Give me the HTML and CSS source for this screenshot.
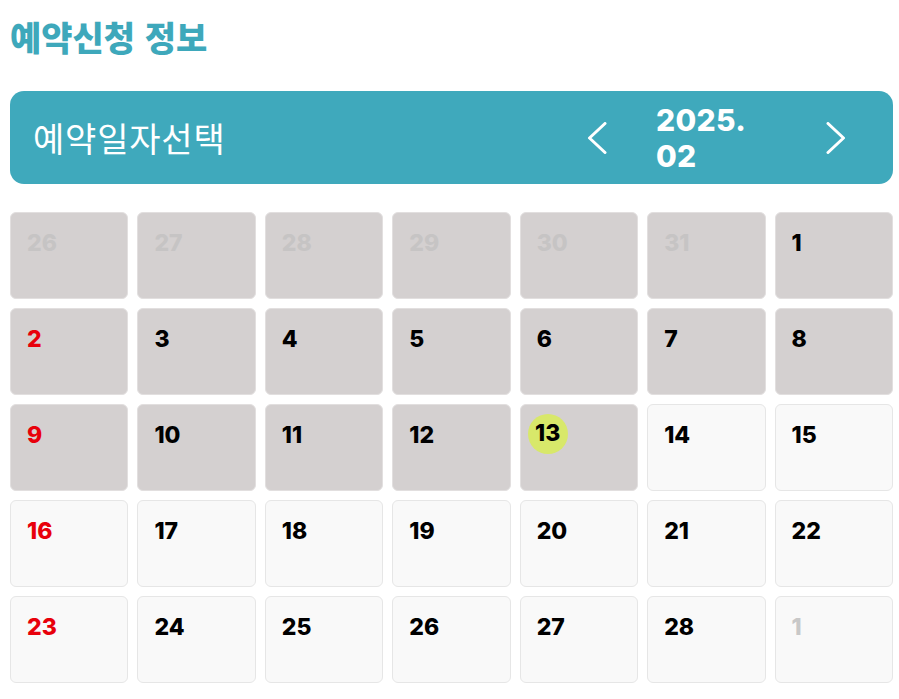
FILE: index.html
```
<!DOCTYPE html>
<html lang="ko">
<head>
<meta charset="utf-8">
<title>예약신청 정보</title>
<link rel="stylesheet" href="styles.css">
</head>
<body>
<h1 class="page-title">예약신청 정보</h1>
<div class="cal-bar">
  <div class="cal-bar-title">예약일자선택</div>
  <div class="cal-nav">
    <button class="nav-btn prev" aria-label="이전 달">
      <svg width="20" height="32" viewBox="0 0 20 32"><polyline points="18,1.5 2.5,16 18,30.5" fill="none" stroke="#fff" stroke-width="3" stroke-linecap="round" stroke-linejoin="round"/></svg>
    </button>
    <div class="cal-month">2025. 02</div>
    <button class="nav-btn next" aria-label="다음 달">
      <svg width="20" height="32" viewBox="0 0 20 32"><polyline points="2,1.5 17.5,16 2,30.5" fill="none" stroke="#fff" stroke-width="3" stroke-linecap="round" stroke-linejoin="round"/></svg>
    </button>
  </div>
</div>
<div class="cal-grid">
  <div class="cell past"><span class="num other">26</span></div>
  <div class="cell past"><span class="num other">27</span></div>
  <div class="cell past"><span class="num other">28</span></div>
  <div class="cell past"><span class="num other">29</span></div>
  <div class="cell past"><span class="num other">30</span></div>
  <div class="cell past"><span class="num other">31</span></div>
  <div class="cell past"><span class="num">1</span></div>

  <div class="cell past"><span class="num sun">2</span></div>
  <div class="cell past"><span class="num">3</span></div>
  <div class="cell past"><span class="num">4</span></div>
  <div class="cell past"><span class="num">5</span></div>
  <div class="cell past"><span class="num">6</span></div>
  <div class="cell past"><span class="num">7</span></div>
  <div class="cell past"><span class="num">8</span></div>

  <div class="cell past"><span class="num sun">9</span></div>
  <div class="cell past"><span class="num">10</span></div>
  <div class="cell past"><span class="num">11</span></div>
  <div class="cell past"><span class="num">12</span></div>
  <div class="cell past"><span class="num today">13</span></div>
  <div class="cell"><span class="num">14</span></div>
  <div class="cell"><span class="num">15</span></div>

  <div class="cell"><span class="num sun">16</span></div>
  <div class="cell"><span class="num">17</span></div>
  <div class="cell"><span class="num">18</span></div>
  <div class="cell"><span class="num">19</span></div>
  <div class="cell"><span class="num">20</span></div>
  <div class="cell"><span class="num">21</span></div>
  <div class="cell"><span class="num">22</span></div>

  <div class="cell"><span class="num sun">23</span></div>
  <div class="cell"><span class="num">24</span></div>
  <div class="cell"><span class="num">25</span></div>
  <div class="cell"><span class="num">26</span></div>
  <div class="cell"><span class="num">27</span></div>
  <div class="cell"><span class="num">28</span></div>
  <div class="cell"><span class="num next-month">1</span></div>
</div>
</body>
</html>
```
FILE: styles.css
```
* { box-sizing: border-box; }
html, body { margin: 0; padding: 0; background: #fff; }
body {
  padding: 0 6px 0 10px;
  font-family: "Noto Sans CJK KR", "Noto Sans", sans-serif;
}
.page-title {
  margin: 17px 0 0;
  height: 40px;
  line-height: 40px;
  font-size: 34px;
  font-weight: 900;
  color: #3ea8bb;
  letter-spacing: 0px;
}
.cal-bar {
  margin-top: 34px;
  height: 93px;
  background: #3fa9bc;
  border-radius: 14px;
  display: flex;
  align-items: center;
  padding: 0 47px 0 23px;
  color: #fff;
}
.cal-bar-title {
  font-size: 34px;
  font-weight: 400;
  line-height: 40px;
  letter-spacing: 0.8px;
}
.cal-nav {
  margin-left: auto;
  display: flex;
  align-items: center;
}
.nav-btn {
  border: 0;
  background: none;
  padding: 0;
  width: 20px;
  height: 32px;
  display: flex;
  cursor: pointer;
}
.cal-month {
  width: 100px;
  margin: 0 70px 0 49px;
  font-family: Inter, "Noto Sans", sans-serif;
  font-weight: 800;
  font-size: 30px;
  line-height: 36px;
  letter-spacing: 0.3px;
}
.cal-grid {
  margin-top: 28px;
  display: grid;
  grid-template-columns: repeat(7, 1fr);
  grid-auto-rows: 87px;
  gap: 9px;
}
.cell {
  background: #f9f9f9;
  border: 1px solid #e6e6e6;
  border-radius: 6px;
  padding: 17px 16px;
}
.cell.past {
  background: #d4d0d0;
  border-color: #e2dfdf;
}
.num {
  display: inline-block;
  font-family: Inter, "Noto Sans", sans-serif;
  font-weight: 800;
  font-size: 23px;
  line-height: 27px;
  color: #000;
}
.num.other { color: #c6c4c4; }
.num.next-month { color: #c8c8c8; }
.num.sun { color: #e8000b; }
.num.today {
  width: 40px;
  height: 40px;
  margin: -10px 0 0 -9px;
  border-radius: 50%;
  background: #d8e86a;
  display: inline-flex;
  align-items: center;
  justify-content: center;
}
```
